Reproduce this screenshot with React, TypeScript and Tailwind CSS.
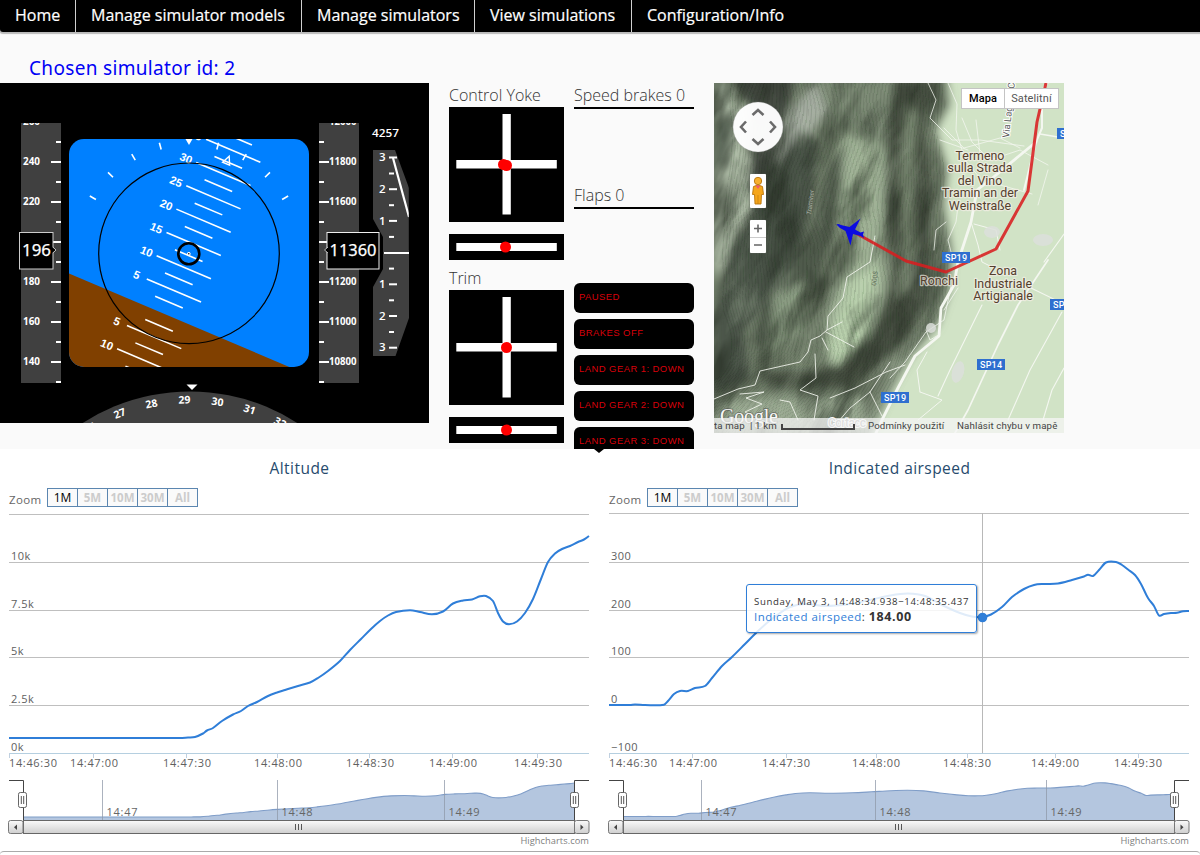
import React from "react";

type Pt = [number, number];

const range = (n: number) => Array.from({ length: n }, (_, i) => i);

function smooth(pts: Pt[]): string {
  const m = pts.map((_, i) => {
    const a = pts[Math.max(0, i - 1)];
    const b = pts[Math.min(pts.length - 1, i + 1)];
    return (b[1] - a[1]) / (b[0] - a[0]);
  });
  let d = `M${pts[0][0]},${pts[0][1]}`;
  for (let i = 0; i < pts.length - 1; i++) {
    const [x1, y1] = pts[i];
    const [x2, y2] = pts[i + 1];
    const h = (x2 - x1) / 3;
    d += `C${x1 + h},${y1 + m[i] * h} ${x2 - h},${y2 - m[i + 1] * h} ${x2},${y2}`;
  }
  return d;
}

/* ---------- navigation ---------- */

const NAV = [
  { label: "Home", cls: "w-[76px]" },
  { label: "Manage simulator models", cls: "w-[226px]" },
  { label: "Manage simulators", cls: "w-[173px]" },
  { label: "View simulations", cls: "w-[157px]" },
  { label: "Configuration/Info", cls: "w-[170px]" },
];

function Nav() {
  return (
    <nav className="flex h-8 overflow-hidden rounded-bl-[3px] bg-black shadow-[0_1px_1px_1px_#b9b9b9]">
      {NAV.map((n, i) => (
        <a
          key={n.label}
          className={`${n.cls} ${i < 4 ? "border-r border-[#d0d0d0]" : ""} h-8 shrink-0 whitespace-nowrap pl-[15px] pt-[3px] text-[16px] leading-6 font-medium text-white [-webkit-text-stroke:0.2px_white]`}
        >
          {n.label}
        </a>
      ))}
    </nav>
  );
}

/* ---------- primary flight display ---------- */

function FlightDisplay() {
  return (
    <svg width="429" height="340" viewBox="0 83 429 340" className="block shrink-0 bg-black" fontFamily="'Open Sans','Noto Sans',sans-serif">
      <defs>
        <clipPath id="att"><rect x="69" y="139" width="240" height="228" rx="15" /></clipPath>
        <clipPath id="spd"><rect x="21" y="123" width="40" height="260" /></clipPath>
        <clipPath id="alt"><rect x="319" y="123" width="40" height="260" /></clipPath>
      </defs>

      <g clipPath="url(#att)">
        <rect x="69" y="139" width="240" height="228" fill="#0080ff" />
        <g transform="translate(164 313.8) rotate(23)" stroke="#fff" strokeWidth="1.6">
          <rect x="-400" y="0" width="800" height="300" fill="#804000" stroke="none" />
          {[-2, -1, 1, 2, 3, 4, 5, 6, 7].map((k) => (
            <g key={k}>
              <line x1="-29.5" x2="29.5" y1={-25.3 * k} y2={-25.3 * k} />
              <text x="-40.5" y={-25.3 * k + 4} stroke="none" fill="#fff" fontSize="11.3" fontWeight="bold" textAnchor="middle" fontFamily="Liberation Sans, sans-serif">
                {Math.abs(k * 5)}
              </text>
            </g>
          ))}
          {[-2.5, -1.5, -0.5, 0.5, 1.5, 2.5, 3.5, 4.5, 5.5, 6.5, 7.5].map((k) => (
            <line key={k} x1="-15" x2="15" y1={-25.3 * k} y2={-25.3 * k} />
          ))}
        </g>
        <g transform="translate(189 253.3)" stroke="#fff" strokeWidth="1.6" fill="none">
          {[-60, -45, -30, -15, 15, 30, 45, 60].map((a) => (
            <line key={a} x1="0" x2="0" y1="-107.5" y2="-114.5" transform={`rotate(${a})`} />
          ))}
          <path d="M0,-105 L-3.8,-97 L3.8,-97 Z" strokeWidth="1.4" transform="rotate(22.5)" />
        </g>
        <path d="M185.5,139 h7 l-3.5,6 z" fill="#fff" />
      </g>
      <circle cx="189" cy="253.3" r="90.3" fill="none" stroke="#000" strokeWidth="1.2" />
      <circle cx="188.8" cy="253.8" r="10.5" fill="none" stroke="#000" strokeWidth="2.6" />
      <circle cx="188.8" cy="253.8" r="1.4" fill="#fff" stroke="#fff" strokeWidth="1" />
      <circle cx="188.8" cy="253.8" r="0.8" fill="#000" />

      <g clipPath="url(#spd)" fill="#fff" fontSize="10" fontWeight="700">
        <rect x="21" y="123" width="40" height="260" fill="#404040" />
        {range(7).map((i) => (
          <g key={i}>
            <rect x="51" y={121 + i * 40} width="10" height="2" />
            <rect x="56" y={141 + i * 40} width="5" height="2" />
            {i !== 3 && <text x="23" y={125.2 + i * 40} textLength="17" lengthAdjust="spacingAndGlyphs">{260 - i * 20}</text>}
          </g>
        ))}
      </g>
      <rect x="19.5" y="232.5" width="33.5" height="36.5" fill="#000" stroke="#ccc" strokeWidth="1" />
      <path d="M52,247 L55.5,250 L52,253 Z" fill="#000" />
      <path d="M53,247 L56,250 L53,253" fill="none" stroke="#bbb" strokeWidth="1" />
      <text x="22" y="256" fill="#fff" stroke="#fff" strokeWidth="0.25" fontSize="17" textLength="29" lengthAdjust="spacingAndGlyphs" fontFamily="'Noto Sans',sans-serif">196</text>

      <g clipPath="url(#alt)" fill="#fff" fontSize="10" fontWeight="700">
        <rect x="319" y="123" width="40" height="260" fill="#404040" />
        {range(7).map((i) => (
          <g key={i}>
            <rect x="319" y={121 + i * 40} width="10" height="2" />
            <rect x="319" y={141 + i * 40} width="5" height="2" />
            {i !== 3 && <text x="329" y={125.2 + i * 40} textLength="27.5" lengthAdjust="spacingAndGlyphs">{12000 - i * 200}</text>}
          </g>
        ))}
      </g>

      <path d="M373,150 H395 L409,188 V318 L395.5,356 H373 V287 L383,269 V237 L373,219 Z" fill="#404040" />
      <g fill="#fff">
        {[3, 2, 1, 0, 1, 2, 3].map((v, i) => (
          <g key={i}>
            {v > 0 && <rect x="389" y={156.5 + i * 31.7} width="8" height="2" />}
            {v > 0 && <text x="379" y={161.2 + i * 31.7} fontSize="11.5" fontWeight="600">{v}</text>}
            {i < 6 && <rect x="389" y={172.5 + i * 31.7} width="5" height="2" />}
          </g>
        ))}
        <rect x="384" y="252" width="25" height="2" />
      </g>
      <path d="M393,158 L409,217" stroke="#fff" strokeWidth="2.2" />
      <rect x="408.8" y="150" width="5" height="100" fill="#000" />
      <text x="372" y="137" fill="#fff" fontSize="11" fontWeight="600" textLength="27" lengthAdjust="spacingAndGlyphs">4257</text>
      <rect x="327" y="232.5" width="52" height="36.5" fill="#000" stroke="#eee" />
      <path d="M328,247 L324.5,250 L328,253" fill="#000" stroke="#bbb" />
      <text x="329.5" y="256" fill="#fff" stroke="#fff" strokeWidth="0.25" fontSize="17" textLength="47" lengthAdjust="spacingAndGlyphs" fontFamily="'Noto Sans',sans-serif">11360</text>

      <circle cx="190" cy="590" r="198.5" fill="#404040" />
      {range(7).map((i) => (
        <text key={i} x="190" y="403.5" transform={`rotate(${-31.7 + i * 10} 190 590)`} fill="#fff" fontSize="10.5" fontWeight="700" textAnchor="middle">
          {26 + i}
        </text>
      ))}
      <path d="M186.5,384.5 h11 l-5.5,5.5 z" fill="#fff" />
    </svg>
  );
}

/* ---------- controls ---------- */

function Cross({ dots }: { dots: Pt[] }) {
  return (
    <svg width="115" height="115" className="block bg-black">
      <rect x="53.5" y="7" width="8.3" height="100.5" fill="#fff" />
      <rect x="7.3" y="53" width="100.5" height="8.5" fill="#fff" />
      {dots.map(([x, y]) => (
        <circle key={x} cx={x} cy={y} r="5.5" fill="red" />
      ))}
    </svg>
  );
}

function Slider({ x }: { x: number }) {
  return (
    <svg width="115" height="26" className="mt-3 block bg-black">
      <rect x="7.3" y="9" width="100.5" height="8" fill="#fff" />
      <circle cx={x} cy="13" r="5.5" fill="red" />
    </svg>
  );
}

const LABEL = "h-6 whitespace-nowrap text-[16px] leading-6 font-light text-[#333]";

function Controls() {
  return (
    <div className="ml-5 w-[115px] shrink-0">
      <div className={LABEL}>Control Yoke</div>
      <Cross dots={[[54.5, 57.5], [57.5, 58.5]]} />
      <Slider x={56.5} />
      <div className="pt-[6px]">
        <div className={LABEL}>Trim</div>
      </div>
      <Cross dots={[[57.5, 57.5]]} />
      <Slider x={57.5} />
    </div>
  );
}

const STATUS = ["PAUSED", "BRAKES OFF", "LAND GEAR 1: DOWN", "LAND GEAR 2: DOWN", "LAND GEAR 3: DOWN"];

function Status() {
  return (
    <div className="ml-[10px] w-[120px] shrink-0">
      <div className="h-[100px]">
        <div className={`${LABEL} h-[26px] border-b-2 border-black`}>Speed brakes 0</div>
      </div>
      <div className="h-[100px]">
        <div className={`${LABEL} h-[26px] border-b-2 border-black`}>Flaps 0</div>
      </div>
      <div className="flex flex-col gap-[6px]">
        {STATUS.map((s) => (
          <div key={s} className="h-[30px] shrink-0 whitespace-nowrap rounded-md bg-black pl-[5px] pt-[6px] font-['Liberation_Sans',sans-serif] text-[9.5px] leading-[15px] tracking-[0.42px] text-[#d8000a]">
            {s}
          </div>
        ))}
      </div>
    </div>
  );
}

/* ---------- map ---------- */

function Badge({ x, y, t, w = 28 }: { x: number; y: number; t: string; w?: number }) {
  return (
    <g>
      <rect x={x} y={y} width={w} height="11" fill="#2f6fcf" />
      <text x={x + 3} y={y + 8.9} fontSize="9" fontWeight="500" letterSpacing="0.2" fill="#fff">{t}</text>
    </g>
  );
}

function PlaceName({ x, y, lines }: { x: number; y: number; lines: string[] }) {
  return (
    <g fontSize="12.4" fontWeight="400" textAnchor="middle" fill="#54402e" stroke="#f4efe6" strokeWidth="2.4" strokeOpacity="0.7" paintOrder="stroke" strokeLinejoin="round">
      {lines.map((l, i) => (
        <text key={l} x={x} y={y + i * 12.5}>{l}</text>
      ))}
    </g>
  );
}

function MapPanel() {
  return (
    <div className="relative ml-5 h-[350px] w-[350px] shrink-0 overflow-hidden font-['Roboto',sans-serif]">
      <svg width="350" height="350" viewBox="714 83 350 350" className="block" fontFamily="Roboto, sans-serif">
        <defs>
          <filter id="b5" x="-50%" y="-50%" width="200%" height="200%"><feGaussianBlur stdDeviation="4" /></filter>
          <filter id="shade" x="0" y="0" width="100%" height="100%" colorInterpolationFilters="sRGB">
            <feTurbulence type="fractalNoise" baseFrequency="0.034 0.011" numOctaves="4" seed="11" />
            <feColorMatrix type="matrix" values="0 0 0 0 0.14  0 0 0 0 0.17  0 0 0 0 0.13  3.2 0 0 0 -1.5" />
          </filter>
          <filter id="shine" x="0" y="0" width="100%" height="100%" colorInterpolationFilters="sRGB">
            <feTurbulence type="fractalNoise" baseFrequency="0.034 0.011" numOctaves="4" seed="11" />
            <feColorMatrix type="matrix" values="0 0 0 0 0.8  0 0 0 0 0.87  0 0 0 0 0.76  -3.2 0 0 0 1.35" />
          </filter>
          <filter id="bend" x="-5%" y="-5%" width="110%" height="110%">
            <feTurbulence type="fractalNoise" baseFrequency="0.012" numOctaves="2" seed="4" />
            <feDisplacementMap in="SourceGraphic" scale="30" />
          </filter>
          <clipPath id="hill">
            <path d="M714,83 H942 L946,105 L936,130 L946,170 L942,205 L951,250 L949,282 L940,315 L916,348 L896,378 L874,420 L868,433 H714 Z" />
          </clipPath>
          <mask id="hillFade">
            <path d="M690,60 H936 L940,105 L930,130 L940,170 L936,205 L944,250 L942,282 L932,315 L908,348 L888,378 L866,420 L860,450 H690 Z" fill="#fff" filter="url(#b5)" />
          </mask>
          <clipPath id="mapArea"><rect x="714" y="83" width="350" height="350" /></clipPath>
        </defs>
        <g clipPath="url(#mapArea)">
          <rect x="714" y="83" width="350" height="350" fill="#d1e3c6" />
          <path d="M700,70 H946 L950,105 L936,130 L948,170 L944,205 L952,250 L950,290 L938,325 L910,358 L890,390 L868,440 H700 Z" fill="#6f7d69" filter="url(#b5)" />
          <g filter="url(#b5)">
            <path d="M714,96 L748,108 L744,150 L760,165 L744,230 L714,280 Z" fill="#b3c1ab" />
            <path d="M714,83 L728,83 L735,104 L722,115 Z" fill="#c0cfb8" />
            <path d="M714,120 L726,112 L738,118 L728,165 L714,176 Z" fill="#5f6a5b" />
            <path d="M726,70 L798,70 L778,140 L764,200 L748,190 L752,110 Z" fill="#454c43" />
            <path d="M792,108 L815,84 L838,95 L806,140 L780,170 L773,160 Z" fill="#a3ab9f" />
            <path d="M762,185 L800,130 L818,140 L812,205 L796,265 L745,330 L712,325 L728,250 Z" fill="#4a5246" />
            <path d="M840,130 L860,140 L884,130 L894,150 L880,240 L888,290 L860,350 L830,370 L826,320 L846,260 L830,190 Z" fill="#9fb195" />
            <path d="M815,80 L895,80 L902,140 L885,150 L860,130 L830,120 Z" fill="#7d8b76" />
            <path d="M826,175 L846,140 L838,220 L815,290 L785,330 L752,350 L765,300 L812,230 Z" fill="#505a4c" />
            <path d="M893,80 L940,80 L922,120 L931,180 L929,250 L932,290 L910,335 L880,365 L850,386 L770,390 L760,372 L815,372 L850,354 L878,325 L892,270 L884,200 L886,140 Z" fill="#444d41" />
            <path d="M908,100 L918,120 L911,190 L916,240 L906,290 L899,300 L905,240 L900,180 Z" fill="#75836d" />
            <path d="M850,280 L880,265 L866,335 L836,367 L826,345 Z" fill="#b8cfac" />
            <path d="M775,296 L808,280 L800,330 L768,358 Z" fill="#8a9b82" />
            <path d="M714,320 L742,315 L750,380 L714,396 Z" fill="#4b5448" />
            <path d="M714,400 L860,396 L885,360 L905,362 L872,430 L714,433 Z" fill="#98a790" />
            <path d="M860,390 L900,350 L888,385 L866,425 Z" fill="#6f7b69" />
          </g>
          <g mask="url(#hillFade)">
            <g transform="rotate(20 820 250)">
              <rect x="620" y="0" width="410" height="500" filter="url(#shade)" opacity="0.6" />
              <rect x="620" y="0" width="410" height="500" filter="url(#shine)" opacity="0.28" />
            </g>
          </g>
          <g clipPath="url(#hill)">
            <g filter="url(#bend)" fill="none" stroke="#232c20" strokeOpacity="0.17" strokeWidth="0.7">
              {range(70).map((i) => (
                <path key={i} d={`M${732 + i * 3.4},60 C${742 + i * 3.1},150 ${700 + i * 3.8},250 ${725 + i * 3.3},320 S${640 + i * 4},400 ${650 + i * 4},460`} />
              ))}
            </g>
          </g>

          <g fill="none" stroke="#f4f7f0" strokeLinecap="round" strokeLinejoin="round">
            <path d="M1036,142 L990,180 L977,190 L971,222 L958,262 L954,285 L941,308 L939,336 L915,356 L898,388 L882,420 L876,433" strokeWidth="2.8" />
            <path d="M1064,62 L1042,90 L1042,128 L1036,142 L1024,190" strokeWidth="2" />
            <path d="M1040,134 L1064,138" strokeWidth="1.6" />
            <path d="M1048,260 L1018,305 L998,345 L968,410 L955,433" strokeWidth="1.7" />
            <path d="M982,305 L950,370 L938,396 M1062,312 L1030,370 L1008,420 M1064,368 L1052,390 L1043,420 M1064,234 L1044,262 M1031,288 L1064,304" strokeWidth="1.1" />
            <path d="M971,222 L978,245 L982,262 L990,266 M974,224 L996,230 L1000,250 M920,392 L942,400 L918,420 M920,392 L917,370 L927,352" strokeWidth="1" />
            <path d="M928,83 L936,100 L930,118 L942,130 L952,140 L980,140 L1024,146 M948,83 L957,104 L956,130 L965,160 L980,178 M944,128 L964,148 L1000,138 L1020,148 M962,118 L972,142 L990,160 M976,120 L980,154 M940,140 L968,150 M958,206 L956,222 L948,240 L951,252 M946,222 L936,230 L934,250 M990,160 L1020,150 L1048,165 M1000,185 L1032,194 M1048,170 L1038,205" strokeWidth="0.9" strokeOpacity="0.85" />
            <path d="M875,236 L870,262 L847,277 L843,298 L828,316 L827,330 L842,322 M827,330 L820,336 L811,340 L808,352 L800,362 L760,371 L755,385 L738,389 L714,399 M826,332 L854,347 M822,338 L828,350 M815,354 L816,378 L800,390 L818,396 L814,420 M740,394 L764,392 L746,398 L762,404 L745,412 L770,424 M780,400 L790,402 L798,420 M830,398 L855,388 L886,372 L905,365 M890,362 L870,392 L850,408 L838,422 M870,392 L882,416" strokeWidth="1" strokeOpacity="0.85" />
            <path d="M951,286 L944,320 L926,332 L905,362 L890,378 M958,288 L944,310 M926,330 L930,340 L940,334" strokeWidth="1" strokeOpacity="0.8" />
          </g>
          <g fill="#dcdfda" fillOpacity="0.85">
            <ellipse cx="958" cy="372" rx="6" ry="11" transform="rotate(15 958 372)" />
            <ellipse cx="931" cy="328" rx="5" ry="5" />
            <ellipse cx="1043" cy="240" rx="10" ry="6" />
            <ellipse cx="992" cy="232" rx="8" ry="6" />
          </g>

          <PlaceName x={980} y={159.5} lines={["Termeno", "sulla Strada", "del Vino", "Tramin an der", "Weinstraße"]} />
          <PlaceName x={939} y={284.5} lines={["Ronchi"]} />
          <PlaceName x={1003} y={275} lines={["Zona", "Industriale", "Artigianale"]} />
          <text transform="translate(1009 138) rotate(-84)" fontSize="9.5" fill="#5a5a5a" stroke="#fff" strokeWidth="2" paintOrder="stroke">Via Lago di Ca</text>
          <text transform="translate(811 215) rotate(-83)" fontSize="6.5" fill="#c8cec4" fillOpacity="0.7" fontStyle="italic">Traminer</text>
          <text transform="translate(876 286) rotate(-83)" fontSize="6.5" fill="#3c4638" fillOpacity="0.7">0008</text>

          <path d="M1046,83 L1037,122 L1033,153 L1028,191 L996,249 L946,272 L906,261 L852,231" fill="none" stroke="#d81e20" strokeWidth="3" strokeOpacity="0.88" strokeLinejoin="round" />
          <Badge x={942} y={252} t="SP19" />
          <Badge x={881} y={392} t="SP19" />
          <Badge x={977} y={359} t="SP14" />
          <Badge x={1057} y={128} t="SP19" />
          <Badge x={1050} y={299} t="SP19" />
          <path d="M836.5,224.5 Q838,223.5 841,225 L849.5,227 L860.5,218.5 L855,229.5 L860.5,232.5 L864,231.5 L863,234.5 L864,238 L860.5,236 L853,234 L850.5,245.5 L845.5,231 L840,228 Z" fill="#0c0ce0" />

          <text x="720" y="423" fontFamily="'Liberation Serif', serif" fontSize="20" fill="#f8f8f8" stroke="#444" strokeOpacity="0.45" strokeWidth="2" paintOrder="stroke" textLength="58">Google</text>

          <circle cx="758" cy="127" r="25" fill="#fff" fillOpacity="0.97" stroke="#999" strokeOpacity="0.3" />
          <path d="M752.5,115 L758,110 L763.5,115 M752.5,139 L758,144 L763.5,139 M746,121.5 L741,127 L746,132.5 M770,121.5 L775,127 L770,132.5" fill="none" stroke="#6b6b6b" strokeWidth="2.6" />
          <text x="828" y="427" fontSize="12" fontWeight="500" fill="#999" stroke="#fff" strokeWidth="2" paintOrder="stroke" textLength="38">Cortacc</text>
        </g>
      </svg>

      <div className="absolute left-[36px] top-[91px] flex h-[34px] w-4 items-center justify-center rounded-[1px] bg-white shadow-[0_0_1px_#888]">
        <svg width="14" height="30" viewBox="0 0 14 30">
          <path d="M2.5,10.5 Q7,7.5 11.5,10.5 L12.5,18.5 L10.5,18.5 L10,28 L4,28 L3.5,18.5 L1.5,18.5 Z" fill="#f5a61c" stroke="#b8740c" strokeWidth="0.9" />
          <circle cx="7" cy="5" r="3.7" fill="#f7b12e" stroke="#b8740c" strokeWidth="0.9" />
          <path d="M4.5,9.5 L7,13 L9.5,9.5 Z" fill="#ef5a70" />
          <path d="M7,19 V28" stroke="#c27c10" strokeWidth="0.7" />
        </svg>
      </div>
      <div className="absolute left-[36px] top-[137px] flex h-[33px] w-4 flex-col rounded-[1px] bg-white shadow-[0_0_1px_#888]">
        <svg width="16" height="33" stroke="#666" strokeWidth="1.6">
          <path d="M4,8.5 H12 M8,4.5 V12.5 M4,25 H12" />
          <path d="M0,17.5 H16" stroke="#ccc" strokeWidth="1" />
        </svg>
      </div>
      <div className="absolute left-[247px] top-[5px] flex h-[21px] border border-[#c4c4c4] bg-white text-[11px] leading-[19px] tracking-[0.1px]">
        <div className="w-[43px] border-r border-[#c4c4c4] text-center font-medium text-black">Mapa</div>
        <div className="w-[53px] text-center text-[#555]">Satelitní</div>
      </div>
      <div className="absolute bottom-0 left-0 flex h-[15px] w-[350px] overflow-hidden whitespace-nowrap bg-[#f5f5f5]/75 text-[9.7px] leading-[15px] tracking-[0.13px] text-[#444]">
        <div className="w-[36px] shrink-0">ta map</div>
        <div className="w-[31px] shrink-0">| 1 km</div>
        <svg width="75" height="15" className="shrink-0"><path d="M1,6 V11 H73 V6" fill="none" stroke="#444" strokeWidth="2" /></svg>
        <div className="ml-[12px] w-[89px] shrink-0">Podmínky použití</div>
        <div className="shrink-0">Nahlásit chybu v mapě</div>
      </div>
    </div>
  );
}

/* ---------- charts ---------- */

const ALTITUDE: Pt[] = [
  [9, 738], [60, 738], [120, 738], [180, 738], [188, 737.5], [195, 737], [203, 733.5], [207, 730.5], [213, 728], [222, 721], [233, 714.5], [241, 711],
  [248, 706], [257, 702], [268, 696], [277, 692.5], [285, 690], [298, 686], [310, 682.5], [318, 678], [328, 671], [340, 661], [350, 650], [361, 639],
  [371, 629], [380, 621], [388, 615.5], [396, 612], [410, 610.3], [420, 612], [432, 614.2], [443, 611.5], [453, 603.5], [463, 600.5], [472, 599.5],
  [480, 596.3], [486, 596], [493, 601], [498, 613], [503, 621.5], [509, 624.3], [517, 621.5], [525, 613], [533, 599], [541, 579], [548, 562],
  [555, 553.5], [562, 549], [570, 546], [578, 542], [584, 539.5], [589, 536],
];

const AIRSPEED: Pt[] = [
  [9, 705], [30, 705], [35, 704.5], [45, 705], [64, 704.7], [68, 701], [74, 694], [80, 691], [88, 691], [95, 688], [105, 686], [112, 678],
  [122, 666], [132, 657], [145, 644], [157, 632], [168, 622], [180, 613], [190, 607], [205, 604], [225, 606], [250, 604], [270, 600], [290, 595.5],
  [308, 593.5], [325, 596], [342, 605], [360, 613], [372, 616.5], [382, 617], [391, 614.5], [402, 607], [412, 597], [424, 589], [434, 585], [444, 584],
  [458, 583.5], [472, 580], [484, 576.5], [488, 574.7], [493, 576], [499, 570], [506, 562.5], [516, 562], [522, 565], [528, 569.5], [535, 575],
  [541, 584], [548, 598], [554, 606], [559, 615.5], [564, 614], [571, 613], [577, 612.7], [583, 611.3], [589, 611],
];

const BUTTONS = ["1M", "5M", "10M", "30M", "All"];

interface ChartProps {
  id: string;
  title: string;
  pts: Pt[];
  labels: string[];
  topLine: number;
  cross?: boolean;
  navScale: (y: number) => number;
  marks: number[];
  navLines: number[];
  ticks: number[];
  children?: React.ReactNode;
}

function Chart({ id, title, pts, labels, topLine, cross, navScale, marks, navLines, ticks, children }: ChartProps) {
  const nav: Pt[] = pts.map(([x, y]) => [23.5 + ((x - 9) * 551) / 580, navScale(y)]);
  const line = smooth(pts);
  const navLine = smooth(nav);
  const times = ["14:46:30", "14:47:00", "14:47:30", "14:48:00", "14:48:30", "14:49:00", "14:49:30"];
  return (
    <div className="relative flex h-[402px] w-[600px] shrink-0 flex-col font-['Open_Sans','Noto_Sans',sans-serif]">
      <h2 className="h-[39px] pr-[1px] pt-[9px] text-center text-[15.5px] leading-5 tracking-[0.45px] text-[#274b6d]">{title}</h2>
      <div className="flex h-[23px] pl-[9px]">
        <span className="w-[38px] pt-[2px] text-[11.5px] leading-[19px] tracking-[0.35px] text-[#666]">Zoom</span>
        <div className="flex h-[19px] border border-[#5b86b0] bg-[#fafafa] text-center text-[11.5px] leading-[18px]">
          {BUTTONS.map((b, i) => (
            <span key={b} className={`${i < 4 ? "border-r border-[#5b86b0]" : ""} ${i === 0 ? "text-[12px] font-medium text-black" : "font-bold text-[#ccc]"} ${i === 4 ? "w-[29px]" : "w-[30px]"} overflow-hidden whitespace-nowrap`}>
              {b}
            </span>
          ))}
        </div>
      </div>
      <svg width="600" height="310" viewBox="0 511 600 310" className="block shrink-0">
        {[topLine, 562.5, 610.5, 657.5, 705.5].map((y) => (
          <path key={y} d={`M9,${y} H589`} stroke="#bfbfbf" />
        ))}
        <path d="M9,753.5 H589" stroke="#b5cfe0" />
        {ticks.map((x) => (
          <path key={x} d={`M${x},753 v5`} stroke="#c0d0e0" />
        ))}
        {cross && <path d="M382.5,513 V753" stroke="#b8b8b8" />}
        <path d={line} fill="none" stroke="#2f7ed8" strokeWidth="2" strokeLinejoin="round" />
        {cross && <circle cx="382.5" cy="617.5" r="4.8" fill="#2f7ed8" />}
        <g fontSize="11" fill="#606060" letterSpacing="0.5">
          {labels.map((l, i) => (
            <text key={l} x="11" y={[560, 608, 655, 703, 751][i]}>{l}</text>
          ))}
          {times.map((t, i) => (
            <text key={t} x={marks[i]} y="767" letterSpacing="0" textLength="48" lengthAdjust="spacing">{t}</text>
          ))}
        </g>
        <path d={`${navLine} L574.5,820 L23.5,820 Z`} fill="#b4c6df" />
        <path d={navLine} fill="none" stroke="#7f9dc8" strokeWidth="1.1" />
        {navLines.map((x, i) => (
          <g key={x}>
            <path d={`M${x},780 V820`} stroke="#8f98a8" strokeOpacity="0.75" />
            <text x={x + 4} y="815.5" fontSize="11" fill="#666" textLength="31" lengthAdjust="spacing">{`14:4${7 + i}`}</text>
          </g>
        ))}
        <path d="M9,780.5 H23.5 V821 M589,780.5 H574.5 V821" fill="none" stroke="#444" />
        {[22.5, 574.5].map((x) => (
          <g key={x}>
            <rect x={x - 4} y="792.5" width="8" height="15" rx="1.8" fill="#fff" stroke="#666" />
            <path d={`M${x - 1.2},796 v8 M${x + 1.2},796 v8`} stroke="#555" />
          </g>
        ))}
      </svg>
      <svg width="600" height="14" viewBox="0 821 600 14" className="-mt-px block shrink-0">
        <defs>
          <linearGradient id={`sb-${id}`} x1="0" y1="0" x2="0" y2="1">
            <stop offset="0" stopColor="#fafafa" />
            <stop offset="1" stopColor="#cfcfcf" />
          </linearGradient>
        </defs>
        <rect x="23.5" y="821.5" width="551" height="13" fill={`url(#sb-${id})`} stroke="#666" />
        <rect x="8.5" y="821.5" width="14.5" height="13" rx="2" fill={`url(#sb-${id})`} stroke="#777" />
        <rect x="574.5" y="821.5" width="14.5" height="13" rx="2" fill={`url(#sb-${id})`} stroke="#777" />
        <path d="M17,825.5 V831 L14,828.2 Z M580.5,825.5 V831 L583.5,828.2 Z" fill="#444" />
        <path d="M295.5,825 v6 M298.5,825 v6 M301.5,825 v6" stroke="#555" />
      </svg>
      <div className="h-[15px] pr-[11px] text-right text-[9.3px] leading-[14px] tracking-[0.05px] text-[#808080]">Highcharts.com</div>
      {children}
    </div>
  );
}

export default function App() {
  return (
    <div className="h-[855px] w-[1200px] overflow-hidden bg-[#fafafa] font-['Open_Sans','Noto_Sans',sans-serif]">
      <Nav />
      <div className="h-[51px] pl-[29px] pt-[22px] font-['Noto_Sans',sans-serif] text-[19px] leading-7 tracking-[0.32px] text-[#0000f5]">
        Chosen simulator id: 2
      </div>
      <div className="flex h-[366px] overflow-hidden">
        <FlightDisplay />
        <Controls />
        <Status />
        <MapPanel />
      </div>
      <div className="relative flex h-[402px] bg-white">
        <div className="absolute left-[594px] top-0 h-0 w-0 border-x-[5px] border-t-[4px] border-x-transparent border-t-black" />
        <Chart
          id="alt"
          title="Altitude"
          pts={ALTITUDE}
          labels={["10k", "7.5k", "5k", "2.5k", "0k"]}
          topLine={514.5}
          navScale={(y) => 817 - (738 - y) * 0.168}
          ticks={[9.5, 93.5, 186.5, 277.5, 369.5, 452.5, 537.5]}
          marks={[9, 70, 163, 254, 346, 429, 514]}
          navLines={[102.5, 277.5, 444.5]}
        />
        <Chart
          id="ias"
          title="Indicated airspeed"
          pts={AIRSPEED}
          labels={["300", "200", "100", "0", "−100"]}
          topLine={513.5}
          cross
          navScale={(y) => 816.5 - (705 - y) * 0.235}
          ticks={[9.5, 92.5, 186.5, 276.5, 367.5, 455.5, 538.5]}
          marks={[9, 69, 162, 252, 343, 431, 514]}
          navLines={[101.5, 275.5, 446.5]}
        >
          <div className="absolute left-[146px] top-[135px] h-[49px] w-[231px] whitespace-nowrap rounded-[3px] border border-[#2f7ed8] bg-white/85 pl-[7px] pt-[9px] text-[#333] shadow-[1px_1px_2px_rgba(0,0,0,0.35)]">
            <div className="text-[9.6px] leading-4 tracking-[0.65px]">Sunday, May 3, 14:48:34.938−14:48:35.437</div>
            <div className="-mt-px text-[11.5px] leading-[15px] tracking-[0.48px]">
              <span className="text-[#2f7ed8]">Indicated airspeed</span>: <b className="text-[12.5px] tracking-[0.6px]">184.00</b>
            </div>
          </div>
        </Chart>
      </div>
      <div className="h-3 rounded-t-[4px] border-t border-[#aaa] bg-white" />
    </div>
  );
}
